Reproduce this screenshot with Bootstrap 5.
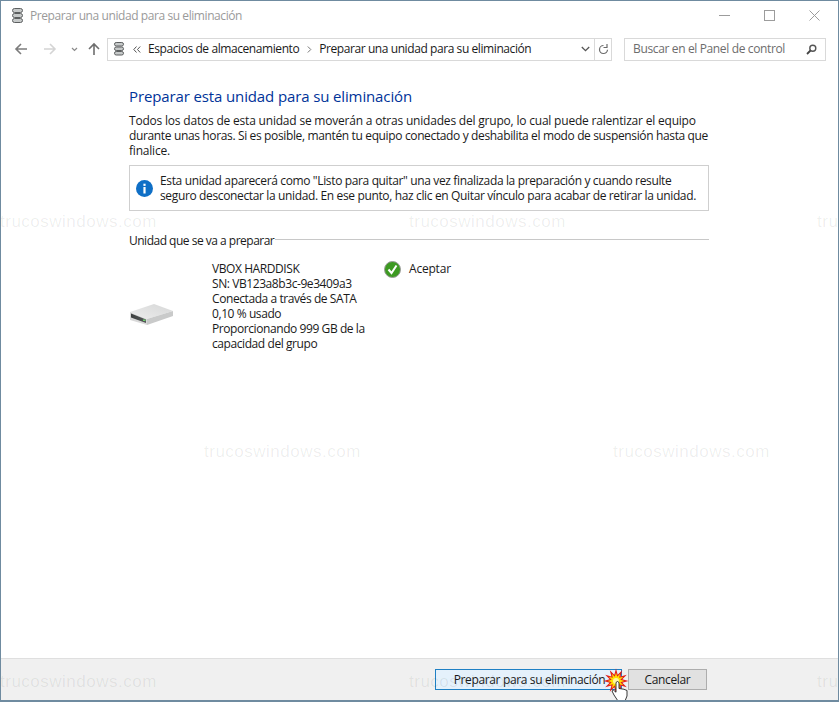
<!DOCTYPE html>
<html lang="es">
<head>
    <meta charset="UTF-8">
    <meta name="viewport" content="width=device-width, initial-scale=1.0">
    <title>Preparar una unidad para su eliminación</title>
    <link href="https://cdn.jsdelivr.net/npm/bootstrap@5.3.0/dist/css/bootstrap.min.css" rel="stylesheet">
    <style>
        html, body { height: 100%; }
        body { margin: 0; background: #fff; font-family: "Open Sans", "Noto Sans", sans-serif; font-size: 12px; color: #1a1a1a; overflow: hidden; }
        .win-frame { position: relative; height: 702px; border: 1px solid #6f8ba0; border-bottom-width: 2px; overflow: hidden; }
        .title-row { height: 29px; padding-left: 9px; color: #9a9a9a; }
        .title-text { margin-left: 5px; letter-spacing: -.42px; }
        .win-btns { margin-right: 1px; }
        .win-btn { width: 45px; height: 29px; }
        .addr-row { height: 24px; padding-left: 13px; padding-right: 12px; margin-top: 7px; }
        .nav-btns { width: 93px; }
        .addr-box { width: 505px; height: 23px; border: 1px solid #d9d9d9; }
        .addr-main { padding-left: 5px; flex: 1; min-width: 0; letter-spacing: -.42px; white-space: nowrap; }
        .addr-chev { margin: 0 7px 0 8px; }
        .addr-crumb { margin-left: 7px; }
        .addr-refresh { width: 17px; height: 21px; border-left: 1px solid #d9d9d9; }
        .search-box { width: 202px; height: 23px; margin-left: 12px; border: 1px solid #d9d9d9; padding: 0 8px; color: #6d6d6d; letter-spacing: -.36px; }
        .page-body { width: 580px; margin-left: 128px; padding-top: 25px; letter-spacing: -.2px; line-height: 15px; white-space: nowrap; }
        .page-heading { font-size: 15px; line-height: 20px; font-weight: 400; color: #003399; margin: 0 0 7px; letter-spacing: -.125px; }
        .intro-text { margin: 0 0 7px; }
        .tight-line { letter-spacing: -.36px; }
        .info-note { height: 46px; border: 1px solid #cfcfcf; padding: 0 8px 0 6px; gap: 7px; letter-spacing: -.36px; }
        .group-head { margin-top: 22px; height: 15px; letter-spacing: -.5px; }
        .group-rule { height: 1px; background: #c8c8c8; margin-left: 1px; margin-top: -2px; }
        .disk-row { margin-top: 13px; }
        .disk-pic { width: 83px; padding-top: 42px; }
        .disk-info { width: 172px; letter-spacing: -.42px; white-space: normal; }
        .disk-state { gap: 8px; }
        .foot-bar { position: absolute; left: 0; right: 0; bottom: 0; height: 42px; background: #f0f0f0; border-top: 1px solid #dfdfdf; padding: 10px 131px 0 0; gap: 6px; }
        .win-action { height: 21px; font-size: 12px; line-height: 19px; padding: 0; border-radius: 0; color: #1a1a1a; letter-spacing: -.36px; font-family: inherit; }
        .action-main { width: 187px; background: #e5f1fb; border: 1px solid #1f80c4; padding-left: 2px; }
        .action-alt { width: 79px; background: #e1e1e1; border: 1px solid #adadad; }
        .mark-text { position: absolute; font-size: 17px; line-height: 18px; letter-spacing: .5px; font-family: "Liberation Sans", sans-serif; color: rgba(0, 0, 0, .07); white-space: nowrap; pointer-events: none; }
        .mark-top { top: 212px; }
        .mark-mid { top: 442px; }
        .mark-low { top: 672px; }
        .mark-col0 { left: -1px; }
        .mark-col1 { left: 203px; }
        .mark-col2 { left: 408px; }
        .mark-col3 { left: 612px; }
        .mark-col4 { left: 816px; }
        .burst-cursor { position: absolute; left: 599px; top: 665px; }
    </style>
</head>
<body>
    <div class="win-frame">
        <div class="title-row d-flex align-items-center">
            <svg width="15" height="18" viewBox="0 0 15 18">
                <g fill="#c6c9c9" stroke="#5c5f60"><rect x="2.5" y="1.5" width="10" height="4" rx="2"/><rect x="2.5" y="6.5" width="10" height="4" rx="2"/><rect x="2.5" y="11.5" width="10" height="4" rx="2"/></g>
            </svg>
            <span class="title-text">Preparar una unidad para su eliminación</span>
            <div class="win-btns d-flex ms-auto">
                <div class="win-btn d-flex align-items-center justify-content-center"><svg width="11" height="11" viewBox="0 0 11 11"><path d="M0 5.5h11" stroke="#9c9c9c"/></svg></div>
                <div class="win-btn d-flex align-items-center justify-content-center"><svg width="11" height="11" viewBox="0 0 11 11"><rect x=".5" y=".5" width="10" height="10" fill="none" stroke="#9c9c9c"/></svg></div>
                <div class="win-btn d-flex align-items-center justify-content-center"><svg width="11" height="11" viewBox="0 0 11 11"><path d="M.5.5l10 10M10.500.5l-10 10" stroke="#9c9c9c" fill="none"/></svg></div>
            </div>
        </div>

        <div class="addr-row d-flex align-items-center">
            <svg class="nav-btns flex-shrink-0" height="16" viewBox="0 0 93 16">
                <path d="M13 8H2M7 3L2 8l5 5" stroke="#7c7c7c" stroke-width="1.6" fill="none"/>
                <path d="M30 8h11M36 3l5 5-5 5" stroke="#d4d4d4" stroke-width="1.6" fill="none"/>
                <path d="M58 7l2.500 2.500L63 7" stroke="#8a8a8a" stroke-width="1.2" fill="none"/>
                <path d="M80 14V3M75 8l5-5 5 5" stroke="#6e6e6e" stroke-width="1.6" fill="none"/>
            </svg>
            <div class="addr-box d-flex align-items-center flex-shrink-0">
                <div class="addr-main d-flex align-items-center">
                    <svg width="12" height="16" viewBox="0 0 12 16" class="me-2 flex-shrink-0">
                        <g fill="#c6c9c9" stroke="#5c5f60"><rect x="1.500" y="1.500" width="9" height="3.500" rx="1.700"/><rect x="1.500" y="6" width="9" height="3.500" rx="1.700"/><rect x="1.500" y="10.500" width="9" height="3.500" rx="1.700"/></g>
                    </svg>
                    <svg width="8" height="7" viewBox="0 0 8 7" class="flex-shrink-0"><path d="M3.500 .5L.8 3.500l2.700 3M7.200 .5L4.500 3.500l2.700 3" stroke="#555" fill="none"/></svg>
                    <span class="addr-crumb">Espacios de almacenamiento</span>
                    <svg class="addr-chev flex-shrink-0" width="5" height="7" viewBox="0 0 5 7"><path d="M.8.5l3 3-3 3" stroke="#777" fill="none"/></svg>
                    <span>Preparar una unidad para su eliminación</span>
                </div>
                <svg class="me-1 flex-shrink-0" width="9" height="6" viewBox="0 0 9 6"><path d="M.8 1l3.700 3.700L8.200 1" stroke="#555" stroke-width="1.300" fill="none"/></svg>
                <div class="addr-refresh d-flex align-items-center justify-content-center flex-shrink-0">
                    <svg width="11" height="13" viewBox="0 0 11 13"><path d="M5.500 2.500a4 4 0 1 1-4 4.300M2 1v3.500h3.500" stroke="#6b6b6b" stroke-width="1.200" fill="none" transform="matrix(-1 0 0 1 11 0)"/></svg>
                </div>
            </div>
            <div class="search-box d-flex align-items-center justify-content-between flex-shrink-0">
                <span>Buscar en el Panel de control</span>
                <svg width="11" height="11" viewBox="0 0 11 11" class="flex-shrink-0"><circle cx="6.800" cy="4.200" r="3" fill="none" stroke="#555" stroke-width="1.400"/><path d="M4.500 6.500L1 10" stroke="#444" stroke-width="1.800"/></svg>
            </div>
        </div>

        <div class="page-body">
            <h1 class="page-heading">Preparar esta unidad para su eliminación</h1>
            <p class="intro-text">Todos los datos de esta unidad se moverán a otras unidades del grupo, lo cual puede ralentizar el equipo<br><span class="tight-line">durante unas horas. Si es posible, mantén tu equipo conectado y deshabilita el modo de suspensión hasta que</span><br>finalice.</p>
            <div class="info-note d-flex align-items-center">
                <svg class="flex-shrink-0" width="17" height="17" viewBox="0 0 17 17">
                    <circle cx="8.500" cy="8.500" r="8.500" fill="#0f6fc6"/>
                    <rect x="7.400" y="7" width="2.200" height="6.500" fill="#fff"/><rect x="7.400" y="3.700" width="2.200" height="2.200" fill="#fff"/>
                </svg>
                <div>Esta unidad aparecerá como "Listo para quitar" una vez finalizada la preparación y cuando resulte<br>seguro desconectar la unidad. En ese punto, haz clic en Quitar vínculo para acabar de retirar la unidad.</div>
            </div>
            <div class="group-head d-flex align-items-center">
                <span class="text-nowrap">Unidad que se va a preparar</span>
                <div class="group-rule flex-grow-1"></div>
            </div>
            <div class="disk-row d-flex">
                <div class="disk-pic flex-shrink-0">
                    <svg width="45" height="23" viewBox="0 0 45 23">
                        <defs>
                            <linearGradient id="diskTop" x1="0" y1="1" x2="1" y2="0"><stop offset="0" stop-color="#ededed"/><stop offset="1" stop-color="#d6d7d7"/></linearGradient>
                            <linearGradient id="diskFace" x1="0" y1="0" x2="1" y2="0"><stop offset="0" stop-color="#3c3f3f"/><stop offset="1" stop-color="#565a5a"/></linearGradient>
                        </defs>
                        <path d="M1 9L25 1l19 7L18 16z" fill="url(#diskTop)"/>
                        <path d="M18 16L44 8v5L18 22z" fill="#c9caca"/>
                        <path d="M1 9l17 7v6L1 17z" fill="#d9d9d9"/>
                        <path d="M2 10.500l15 6v3.500L2 14.500z" fill="url(#diskFace)"/>
                        <rect x="14" y="16.500" width="2.500" height="1.500" fill="#6fce6f"/>
                    </svg>
                </div>
                <div class="disk-info flex-shrink-0">VBOX HARDDISK<br>SN: VB123a8b3c-9e3409a3<br>Conectada a través de SATA<br>0,10 % usado<br>Proporcionando 999 GB de la capacidad del grupo</div>
                <div class="disk-state d-flex align-items-start">
                    <svg class="flex-shrink-0" width="17" height="17" viewBox="0 0 17 17">
                        <circle cx="8.500" cy="8.500" r="8" fill="#3d9a22" stroke="#9a9a9a"/>
                        <path d="M4.500 8.500l3 3.500 5-7.500" stroke="#fff" stroke-width="2" fill="none"/>
                    </svg>
                    <span>Aceptar</span>
                </div>
            </div>
        </div>

        <div class="foot-bar d-flex justify-content-end align-items-start">
            <button type="button" class="btn win-action action-main">Preparar para su eliminación</button>
            <button type="button" class="btn win-action action-alt">Cancelar</button>
        </div>

        <span class="mark-text mark-top mark-col0">trucoswindows.com</span>
        <span class="mark-text mark-top mark-col2">trucoswindows.com</span>
        <span class="mark-text mark-top mark-col4">trucoswindows.com</span>
        <span class="mark-text mark-mid mark-col1">trucoswindows.com</span>
        <span class="mark-text mark-mid mark-col3">trucoswindows.com</span>
        <span class="mark-text mark-low mark-col0">trucoswindows.com</span>
        <span class="mark-text mark-low mark-col2">trucoswindows.com</span>
        <span class="mark-text mark-low mark-col4">trucoswindows.com</span>

        <svg class="burst-cursor" width="30" height="36" viewBox="0 0 30 36">
            <defs>
                <polygon id="burstStar" points="28.500,15 22.300,16.700 26.800,21.200 20.600,19.600 22.200,25.800 17.700,21.300 16,27.500 14.300,21.300 9.800,25.800 11.400,19.600 5.200,21.200 9.700,16.700 3.500,15 9.700,13.300 5.200,8.800 11.400,10.400 9.800,4.200 14.300,8.700 16,2.500 17.700,8.700 22.200,4.200 20.600,10.400 26.800,8.800 22.300,13.300"/>
            </defs>
            <use href="#burstStar" fill="#e21b1b"/>
            <use href="#burstStar" fill="#ffe000" transform="translate(16 15) scale(.68) translate(-16 -15)"/>
            <circle cx="16" cy="15" r="3" fill="#fff6a0"/>
            <path d="M18 35l-4-6-2-4 1.500-.8 2.500 2V16.500q1.500-2 3 0v6q6 .5 8 2V30l-2 5z" fill="#fff" stroke="#222" stroke-width=".9"/>
        </svg>
    </div>

    <script src="https://cdn.jsdelivr.net/npm/bootstrap@5.3.0/dist/js/bootstrap.bundle.min.js"></script>
</body>
</html>
